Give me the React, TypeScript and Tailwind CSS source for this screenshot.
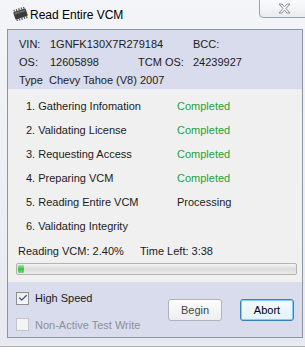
import { Check } from 'lucide-react';

const steps = [
  { label: '1. Gathering Infomation', status: 'Completed', done: true },
  { label: '2. Validating License', status: 'Completed', done: true },
  { label: '3. Requesting Access', status: 'Completed', done: true },
  { label: '4. Preparing VCM', status: 'Completed', done: true },
  { label: '5. Reading Entire VCM', status: 'Processing', done: false },
  { label: '6. Validating Integrity', status: '', done: false },
];

function ChipIcon() {
  return (
    <svg width="17" height="14" viewBox="0 0 17 14">
      <g transform="rotate(-18 8.5 7)">
        <rect x="2" y="3" width="13" height="8" rx="1" fill="#3a3a3a" />
        <rect x="3" y="4" width="11" height="2" fill="#6a6a6a" />
        {[3.5, 6, 8.5, 11, 13.5].map((x) => (
          <g key={x}>
            <rect x={x - 0.6} y="1" width="1.2" height="2" fill="#555" />
            <rect x={x - 0.6} y="11" width="1.2" height="2" fill="#555" />
          </g>
        ))}
      </g>
    </svg>
  );
}

export default function App() {
  return (
    <div className="w-[305px] h-[355px] bg-white overflow-hidden text-[11px] text-[#1b1b1b]" style={{ fontFamily: '"Liberation Sans", Arial, sans-serif' }}>
      {/* window frame */}
      <div className="w-[305px] h-[347px] bg-gradient-to-b from-[#f3f5f8] to-[#e6e9ef] border-b border-[#a9b0bb] flex flex-col">
        {/* title bar */}
        <div className="h-[29px] flex items-start relative">
          <div className="ml-[12px] mt-[7px]">
            <ChipIcon />
          </div>
          <span className="ml-[1px] mt-[6px] text-[12px] text-black">Read Entire VCM</span>
          <div className="absolute right-[-4px] top-[-1px] w-[50px] h-[19px] rounded-b-[4px] border border-[#9aa1ab] bg-gradient-to-b from-[#fbfbfc] to-[#e9ecf0] flex items-center justify-center">
            <svg width="13" height="11" viewBox="0 0 13 11">
              <path d="M1 1h3l2.5 2.8L9 1h3L8 5.5 12 10H9L6.5 7.2 4 10H1l4-4.5z" fill="#f6f6f6" stroke="#8a8f96" strokeWidth="1" strokeLinejoin="round" />
            </svg>
          </div>
        </div>

        {/* client area */}
        <div className="flex-1 ml-[7px] mr-[2px] mb-[8px] border border-[#8d95a3] bg-[#d9dced] flex flex-col">
          {/* vehicle info */}
          <div className="h-[59px] pl-[11px] pt-[5px] flex flex-col">
            <div className="h-[18px] flex items-center">
              <span className="w-[31px]">VIN:</span>
              <span className="w-[143px]">1GNFK130X7R279184</span>
              <span>BCC:</span>
            </div>
            <div className="h-[18px] flex items-center">
              <span className="w-[31px]">OS:</span>
              <span className="w-[88px]">12605898</span>
              <span className="w-[55px]">TCM OS:</span>
              <span>24239927</span>
            </div>
            <div className="h-[18px] flex items-center">
              <span className="w-[30px]">Type</span>
              <span>Chevy Tahoe (V8) 2007</span>
            </div>
          </div>

          {/* steps */}
          <div className="border-t-2 border-[#eceef6] bg-[#f0f0f0] pt-[3px] pb-[7px]">
            {steps.map((s) => (
              <div key={s.label} className="h-[24px] flex items-center pl-[18px]">
                <span className="w-[151px]">{s.label}</span>
                <span className={s.done ? 'text-[#1fa03a]' : ''}>{s.status}</span>
              </div>
            ))}
            <div className="h-[24px] flex items-center pl-[10px] mt-[1px]">
              <span className="w-[122px]">Reading VCM: 2.40%</span>
              <span>Time Left: 3:38</span>
            </div>
            <div className="ml-[8px] mr-[5px] h-[12px] rounded-[2px] border border-[#b4b4b4] bg-gradient-to-b from-[#f4f4f4] via-[#dcdcdc] to-[#ececec] p-[1px] flex">
              <div className="w-[6px] h-full rounded-[1px] bg-gradient-to-b from-[#9be89b] via-[#35c23d] to-[#7ad77e]" />
            </div>
          </div>

          {/* options and buttons */}
          <div className="flex-1 flex items-start pt-[8px] pl-[8px]">
            <div className="flex flex-col gap-[10px] w-[152px]">
              <label className="flex items-center gap-[6px]">
                <span className="w-[13px] h-[13px] border border-[#8f8f8f] bg-gradient-to-br from-[#e7e9ef] to-[#fbfbfb] flex items-center justify-center">
                  <Check size={10} strokeWidth={3} className="text-[#3a4f86]" />
                </span>
                <span>High Speed</span>
              </label>
              <label className="flex items-center gap-[6px]">
                <span className="w-[13px] h-[13px] border border-[#c2c4c9] bg-[#f2f3f5]" />
                <span className="text-[#8d8f95]">Non-Active Test Write</span>
              </label>
            </div>
            <div className="flex gap-[18px] mt-[9px]">
              <button className="w-[54px] h-[22px] rounded-[3px] border border-[#b0b3b9] bg-gradient-to-b from-[#fcfcfc] to-[#eeeeee] text-[#444]">
                Begin
              </button>
              <button className="w-[54px] h-[22px] rounded-[3px] border border-[#3c7fb1] bg-gradient-to-b from-[#f2fafe] to-[#e5f3fb] shadow-[inset_0_0_0_1px_#7fd0f2] text-black">
                Abort
              </button>
            </div>
          </div>
        </div>
      </div>
    </div>
  );
}
